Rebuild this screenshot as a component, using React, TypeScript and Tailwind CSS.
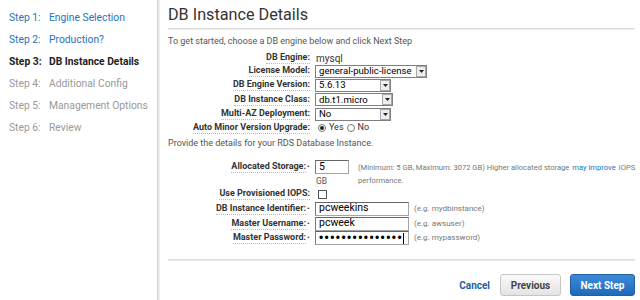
const steps = [
    { n: 1, label: 'Engine Selection', state: 'done' },
    { n: 2, label: 'Production?', state: 'done' },
    { n: 3, label: 'DB Instance Details', state: 'current' },
    { n: 4, label: 'Additional Config', state: 'todo' },
    { n: 5, label: 'Management Options', state: 'todo' },
    { n: 6, label: 'Review', state: 'todo' },
];

function Label({ text, required }: { text: string; required?: boolean }) {
    return (
        <div className="flex justify-end items-center pr-[5px]">
            <span className="font-bold text-[#333] border-b border-dotted border-[#bbb] leading-[11px]">
                {text}:
            </span>
            {required && <span className="text-[#333] text-[8px] ml-[1px] w-[3px]">•</span>}
        </div>
    );
}

function FakeSelect({ value, width }: { value: string; width: string }) {
    return (
        <div className={`${width} h-[13px] flex items-center border border-[#7f7f7f] bg-white`}>
            <span className="flex-1 pl-[3px] text-[9.6px] leading-none text-black whitespace-nowrap">
                {value}
            </span>
            <span className="w-[10px] h-[11px] shrink-0 border border-[#a8a8a8] bg-[#eeeeee] flex items-center justify-center">
                <svg width="5" height="3" viewBox="0 0 5 3">
                    <path d="M0 0h5L2.5 3z" fill="#222" />
                </svg>
            </span>
        </div>
    );
}

function TextBox({ value, width, caret, dots }: { value: string; width: string; caret?: boolean; dots?: boolean }) {
    return (
        <div className={`${width} h-[14px] flex items-center overflow-hidden border border-[#a5a5a5] border-t-[#666] border-l-[#777] bg-white`}>
            <span
                className={`pl-[3px] leading-none text-black whitespace-nowrap ${
                    dots ? "text-[12px] tracking-[1.4px] font-['Liberation_Sans',sans-serif]" : 'text-[10.5px]'
                }`}
            >
                {value}
            </span>
            {caret && <span className="w-[1px] h-[11px] bg-black shrink-0" />}
        </div>
    );
}

function Radio({ checked }: { checked?: boolean }) {
    return (
        <span className="inline-flex w-[8px] h-[8px] rounded-full border border-[#777] bg-white items-center justify-center">
            {checked && <span className="w-[4px] h-[4px] rounded-full bg-[#222]" />}
        </span>
    );
}

export default function App() {
    return (
        <div className="w-[640px] h-[300px] bg-white flex font-['Roboto',sans-serif] overflow-hidden">
            <div className="w-[157px] shrink-0 pt-[7px] pl-[9px]">
                {steps.map(s => (
                    <div
                        key={s.n}
                        className={`h-[22px] flex items-center text-[10.3px] ${
                            s.state === 'done'
                                ? 'text-[#2672c0]'
                                : s.state === 'current'
                                ? 'text-[#222] font-bold'
                                : 'text-[#999]'
                        }`}
                    >
                        <span className="w-[40px]">Step {s.n}:</span>
                        <span>{s.label}</span>
                    </div>
                ))}
            </div>
            <div className="w-[3px] shrink-0 flex">
                <div className="w-[1px] bg-[#cfcfcf]" />
                <div className="w-[2px] bg-[#ececec]" />
            </div>
            <div className="flex-1 min-w-0 pl-[8px] pr-[5px]">
                <h1 className="text-[16.2px] leading-none text-[#333] pt-[7px] h-[28px]">DB Instance Details</h1>
                <div className="h-[2px] bg-[#dcdcdc] border-b border-[#ececec]" />
                <p className="text-[9px] text-[#555] mt-[5px] leading-[12px]">
                    To get started, choose a DB engine below and click Next Step
                </p>

                <div className="grid grid-cols-[147px_1fr] text-[9px] mt-[5px]">
                    <div className="h-[12px] flex justify-end"><Label text="DB Engine" /></div>
                    <div className="h-[12px] flex items-center text-[10px] text-[#333] pl-[1px]">mysql</div>
                    <div className="flex justify-end"><Label text="License Model" /></div>
                    <div className="h-[14px] flex items-center"><FakeSelect value="general-public-license" width="w-[112px]" /></div>
                    <div className="flex justify-end"><Label text="DB Engine Version" /></div>
                    <div className="h-[14px] flex items-center"><FakeSelect value="5.6.13" width="w-[76px]" /></div>
                    <div className="flex justify-end"><Label text="DB Instance Class" /></div>
                    <div className="h-[15px] flex items-center"><FakeSelect value="db.t1.micro" width="w-[78px]" /></div>
                    <div className="flex justify-end"><Label text="Multi-AZ Deployment" /></div>
                    <div className="h-[14px] flex items-center"><FakeSelect value="No" width="w-[76px]" /></div>
                    <div className="flex justify-end"><Label text="Auto Minor Version Upgrade" /></div>
                    <div className="h-[14px] flex items-center gap-[3px] pl-[3px] text-[9px] text-[#333]">
                        <Radio checked /> <span>Yes</span>
                        <Radio /> <span>No</span>
                    </div>
                </div>

                <p className="text-[9px] text-[#555] mt-[2px] leading-[12px]">
                    Provide the details for your RDS Database Instance.
                </p>

                <div className="grid grid-cols-[147px_1fr] text-[9px] mt-[11px]">
                    <div className="h-[27px] flex justify-end items-start pt-[1px]"><Label text="Allocated Storage" required /></div>
                    <div className="h-[27px] flex items-start min-w-0">
                        <div className="w-[43px] shrink-0">
                            <TextBox value="5" width="w-[34px]" />
                            <div className="text-[8.5px] text-[#555] pl-[1px] mt-[2px] leading-[10px]">GB</div>
                        </div>
                        <p className="text-[7.6px] text-[#777] leading-[13px] pt-[1px] whitespace-nowrap">
                            (Minimum: 5 GB, Maximum: 3072 GB) Higher allocated storage{' '}
                            <span className="text-[#2672c0] mx-[1px]">may improve</span> IOPS
                            <br />
                            performance.
                        </p>
                    </div>
                    <div className="flex justify-end"><Label text="Use Provisioned IOPS" /></div>
                    <div className="h-[14px] flex items-center pl-[3px]">
                        <span className="w-[9px] h-[9px] border border-[#555] bg-white" />
                    </div>
                    <div className="flex justify-end"><Label text="DB Instance Identifier" required /></div>
                    <div className="h-[15px] flex items-center gap-[5px]">
                        <TextBox value="pcweekins" width="w-[94px]" />
                        <span className="text-[8px] text-[#777]">(e.g. mydbinstance)</span>
                    </div>
                    <div className="flex justify-end"><Label text="Master Username" required /></div>
                    <div className="h-[15px] flex items-center gap-[5px]">
                        <TextBox value="pcweek" width="w-[94px]" />
                        <span className="text-[8px] text-[#777]">(e.g. awsuser)</span>
                    </div>
                    <div className="flex justify-end"><Label text="Master Password" required /></div>
                    <div className="h-[14px] flex items-center gap-[5px]">
                        <TextBox value="•••••••••••••••" width="w-[94px]" caret dots />
                        <span className="text-[8px] text-[#777]">(e.g. mypassword)</span>
                    </div>
                </div>

                <div className="h-[2px] bg-[#dcdcdc] border-b border-[#ececec] mt-[14px]" />

                <div className="flex justify-end items-center gap-[9px] mt-[13px]">
                    <button className="text-[10px] font-bold text-[#1b5ea8] mr-[1px]">Cancel</button>
                    <button className="w-[61px] h-[22px] rounded-[3px] border border-[#c5c5c5] bg-gradient-to-b from-[#fafafa] to-[#e3e3e3] text-[10px] font-bold text-[#444]">
                        Previous
                    </button>
                    <button className="w-[65px] h-[22px] rounded-[3px] border border-[#1f5fa8] bg-gradient-to-b from-[#3d8ad8] to-[#1f69ba] text-[10px] font-bold text-white">
                        Next Step
                    </button>
                </div>
            </div>
        </div>
    );
}
